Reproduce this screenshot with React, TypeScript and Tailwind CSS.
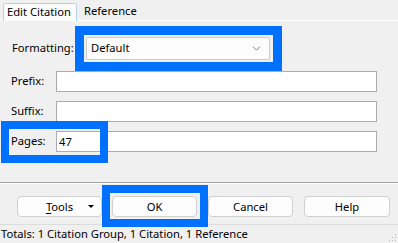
import { ChevronDown } from 'lucide-react';

const Field = ({ label, value }: { label: string; value?: string }) => {
  return (
    <div className="flex items-center h-[21px]">
      <span className="w-[45px]">{label}</span>
      <div className="w-[321px] h-[21px] bg-white border border-[#acacac] px-[2px] leading-[19px]">{value}</div>
    </div>
  );
};

const Btn = ({ children, className = '' }: { children: React.ReactNode; className?: string }) => {
  return (
    <button className={`relative h-[21px] bg-[#fdfdfd] border border-[#d0d0d0] rounded-[4px] text-center leading-[19px] ${className}`}>
      {children}
    </button>
  );
};

const App = () => {
  return (
    <div
      className="w-[398px] h-[243px] bg-[#f0f0f0] text-[11.2px] text-black overflow-hidden flex flex-col"
      style={{ fontFamily: '"Segoe UI", "Noto Sans", sans-serif' }}
    >
      {/* tabs */}
      <div className="h-[21px] flex items-end pl-[3px] border-b border-white">
        <div className="h-[18px] w-[74px] bg-[#fcfcfc] border border-b-0 border-[#b7d0e9] rounded-t-[2px] pl-[3px] leading-[16px] -mb-px">
          Edit Citation
        </div>
        <div className="h-[17px] pl-[7px] leading-[16px]">Reference</div>
      </div>

      {/* panel */}
      <div className="h-[162px] pl-[11px] pt-[5px] flex flex-col border-b border-[#a0a0a0]">
        <div className="flex items-center h-[45px]">
          <span className="w-[64px] pl-[1px]">Formatting:</span>
          <div className="w-[207px] h-[45px] border-[9px] border-[#0070ff] p-[2px]">
            <div className="w-[184px] h-[23px] bg-[#fdfdfd] border border-[#cccccc] rounded-[2px] flex items-center justify-between pl-[4px] pr-[6px]">
              <span>Default</span>
              <ChevronDown size={13} strokeWidth={1.4} className="text-[#555]" />
            </div>
          </div>
        </div>
        <Field label="Prefix:" />
        <div className="h-[9px]" />
        <Field label="Suffix:" />
        <div className="h-[9px]" />
        <div className="relative">
          <Field label="Pages:" value="47" />
          <div className="absolute left-[-10px] top-[-10px] w-[107px] h-[42px] border-[8px] border-[#0070ff] pointer-events-none" />
        </div>
      </div>

      {/* buttons */}
      <div className="h-[42px] border-t border-white flex items-start pt-[12px] pl-[17px] border-b border-b-[#dcdcdc]">
        <Btn className="w-[85px]">
          <span className="underline underline-offset-2">T</span>ools
          <span className="absolute right-[7px] top-[8px] w-0 h-0 border-l-[3px] border-r-[3px] border-t-[3px] border-l-transparent border-r-transparent border-t-black" />
        </Btn>
        <Btn className="w-[85px] ml-[10px]">
          OK
          <span className="absolute left-[-11px] top-[-12px] w-[106px] h-[42px] border-[8px] border-[#0070ff] pointer-events-none" />
        </Btn>
        <Btn className="w-[85px] ml-[11px]">Cancel</Btn>
        <Btn className="w-[86px] ml-[11px]">Help</Btn>
      </div>

      {/* status bar */}
      <div className="relative flex-1 pl-[1px] leading-[17px]">
        Totals: 1 Citation Group, 1 Citation, 1 Reference
        <svg className="absolute right-[1px] bottom-[1px]" width="8" height="8" viewBox="0 0 8 8">
          <rect x="6" y="0" width="1" height="1" fill="#bbb" />
          <rect x="3" y="3" width="1" height="1" fill="#bbb" />
          <rect x="6" y="3" width="1" height="1" fill="#bbb" />
          <rect x="0" y="6" width="1" height="1" fill="#bbb" />
          <rect x="3" y="6" width="1" height="1" fill="#bbb" />
          <rect x="6" y="6" width="1" height="1" fill="#bbb" />
        </svg>
      </div>
    </div>
  );
};

export default App;
